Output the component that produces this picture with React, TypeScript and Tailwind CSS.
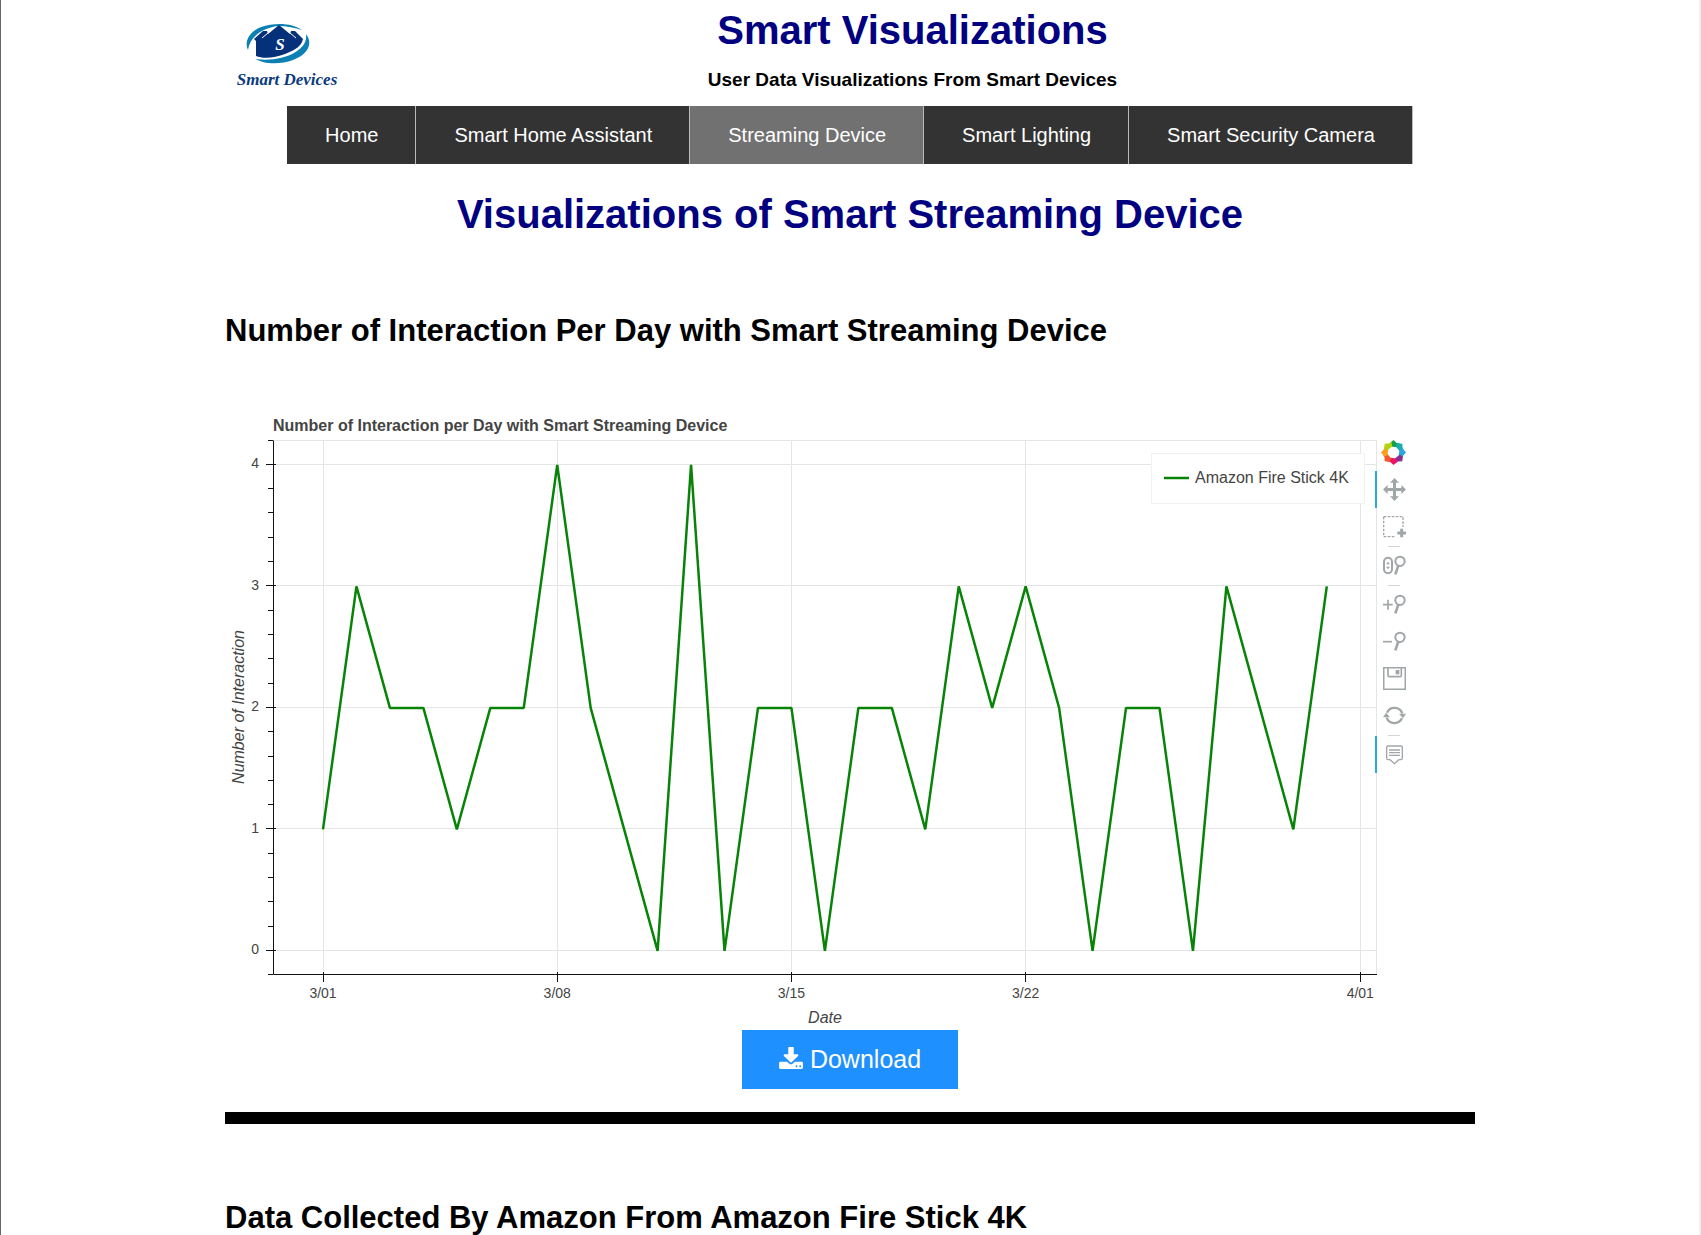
import React from "react";

const navItems = [
  { label: "Home", active: false },
  { label: "Smart Home Assistant", active: false },
  { label: "Streaming Device", active: true },
  { label: "Smart Lighting", active: false },
  { label: "Smart Security Camera", active: false },
];

// Interactions for each day, starting on 3/01.
const interactions = [
  1, 3, 2, 2, 1, 2, 2, 4, 2, 1, 0, 4, 0, 2, 2, 0, 2, 2, 1, 3, 2, 3, 2, 0, 2, 2, 0, 3, 2, 1, 3,
];

const dateTicks = [
  { day: 0, label: "3/01" },
  { day: 7, label: "3/08" },
  { day: 14, label: "3/15" },
  { day: 21, label: "3/22" },
  { day: 31, label: "4/01" },
];

const plot = { left: 48.5, right: 1151.5, top: 30.5, bottom: 564.5 };
const xOf = (day: number) => 98 + day * 33.46;
const yOf = (value: number) => 540.4 - value * 121.5;
const crisp = (v: number) => Math.floor(v) + 0.5;

function Logo() {
  return (
    <svg viewBox="0 0 125 106" className="h-[106px] w-[125px] shrink-0" role="img" aria-label="Smart Devices">
      <path
        d="M23 50 C19 42 24 32 36 27 C50 22 68 23 77 30 C70 28 62 26 53 26 C38 28 25 36 23 50Z"
        fill="#0d80b3"
      />
      <path
        d="M81 34 C88 43 84 54 68 60 C55 65 38 64 31 59 C46 61 60 58 69 53 C79 47 82 41 81 34Z"
        fill="#0d80b3"
      />
      <path
        d="M31 56 V41 L29 39 L38 31 H42 L43 34 L54 25 L65 34 L66 31 H70 L78 39 L77 42 C75 47 68 51 60 54 C50 58 38 59 31 56 Z"
        fill="#05317a"
      />
      <path d="M37 38 L43 33 M65 33 L71 38" stroke="#fff" strokeWidth="1" fill="none" />
      <text x="55" y="50" textAnchor="middle" fontFamily="Liberation Serif, serif" fontStyle="italic" fontWeight="700" fontSize="17" fill="#fff">
        S
      </text>
      <text x="62" y="85" textAnchor="middle" fontFamily="Liberation Serif, serif" fontStyle="italic" fontWeight="700" fontSize="17" fill="#0b3a7e">
        Smart Devices
      </text>
    </svg>
  );
}

function InteractionChart() {
  const minor = Array.from({ length: 23 }, (_, i) => -0.2 + i * 0.2);
  const points = interactions.map((v, d) => `${xOf(d)},${yOf(v) + 0.5}`).join(" ");
  return (
    <svg
      viewBox="0 0 1152 620"
      className="h-auto min-w-0 flex-1"
      fontFamily="Liberation Sans, Arial, sans-serif"
      fill="#444"
      role="img"
      aria-label="Number of Interaction per Day with Smart Streaming Device"
    >
      <text x="48" y="21" fontSize="16" fontWeight="700">
        Number of Interaction per Day with Smart Streaming Device
      </text>
      <g stroke="#e5e5e5" fill="none">
        <rect x={plot.left} y={plot.top} width={plot.right - plot.left} height={plot.bottom - plot.top} />
        {dateTicks.map((t) => (
          <line key={t.day} x1={crisp(xOf(t.day))} x2={crisp(xOf(t.day))} y1={plot.top} y2={plot.bottom} />
        ))}
        {[0, 1, 2, 3, 4].map((v) => (
          <line key={v} x1={plot.left} x2={plot.right} y1={crisp(yOf(v))} y2={crisp(yOf(v))} />
        ))}
      </g>
      <g stroke="#111">
        <line x1={plot.left} x2={plot.left} y1={plot.top} y2={plot.bottom} />
        <line x1={plot.left} x2={plot.right + 0.5} y1={plot.bottom} y2={plot.bottom} />
        {minor.map((v) => (
          <line key={v} x1="43" x2="48" y1={crisp(yOf(v))} y2={crisp(yOf(v))} />
        ))}
        {[0, 1, 2, 3, 4].map((v) => (
          <line key={v} x1="41" x2="51" y1={crisp(yOf(v))} y2={crisp(yOf(v))} />
        ))}
        {dateTicks.map((t) => (
          <line key={t.day} x1={crisp(xOf(t.day))} x2={crisp(xOf(t.day))} y1="562" y2="572" />
        ))}
      </g>
      <g fontSize="14">
        {[0, 1, 2, 3, 4].map((v) => (
          <text key={v} x="34" y={yOf(v) + 4} textAnchor="end">
            {v}
          </text>
        ))}
        {dateTicks.map((t) => (
          <text key={t.day} x={xOf(t.day)} y="588" textAnchor="middle">
            {t.label}
          </text>
        ))}
      </g>
      <text x="600" y="613" fontSize="16" fontStyle="italic" textAnchor="middle">
        Date
      </text>
      <text transform="translate(19 297) rotate(-90)" fontSize="16" fontStyle="italic" textAnchor="middle">
        Number of Interaction
      </text>
      <polyline points={points} fill="none" stroke="#078407" strokeWidth="2.5" strokeLinejoin="bevel" />
      <rect x="926.5" y="43.5" width="213" height="50" fill="#fff" fillOpacity="0.95" stroke="#f2f2f2" />
      <line x1="939" x2="964" y1="68" y2="68" stroke="#078407" strokeWidth="2.5" />
      <text x="970" y="73" fontSize="16">
        Amazon Fire Stick 4K
      </text>
    </svg>
  );
}

const petals = ["#14a04c", "#19adb0", "#27a6e0", "#8a2f92", "#ee1365", "#f2582a", "#f9a01f", "#b6d010"];

function BokehLogo() {
  return (
    <svg viewBox="-38 -38 76 76" className="size-[25px]" aria-hidden="true">
      {petals.map((color, i) => (
        <path key={color} d="M0 -38 L10 -29 L19 -27 L10 -16 L-8 -18 L-12 -28 Z" fill={color} transform={`rotate(${i * 45})`} />
      ))}
    </svg>
  );
}

const magnifier = (
  <g fill="none" stroke="#a1a6a9" strokeWidth="6">
    <circle cx="51" cy="22" r="14" />
    <path d="M46 35 L37 61" strokeWidth="8" />
  </g>
);

const toolIcons: Record<string, React.ReactNode> = {
  Pan: (
    <path
      fill="#a1a6a9"
      d="M34.5 0 L48 14 H39 V30 H55 V21 L69 34.5 L55 48 V39 H39 V55 H48 L34.5 69 L21 55 H30 V39 H14 V48 L0 34.5 L14 21 V30 H30 V14 H21 Z"
    />
  ),
  "Box Select": (
    <g fill="none" stroke="#a1a6a9">
      <path d="M2 5 H60 V36 M2 5 V65 H38" strokeWidth="4" strokeDasharray="8 4" />
      <path d="M43 54 H69 M56 41 V67" strokeWidth="9" />
    </g>
  ),
  "Wheel Zoom": (
    <>
      <rect x="3" y="11" width="24" height="47" rx="12" fill="none" stroke="#a1a6a9" strokeWidth="6" />
      <path d="M9 31 L15 23 L21 31 Z M9 38 L15 46 L21 38 Z" fill="#a1a6a9" />
      {magnifier}
    </>
  ),
  "Zoom In": (
    <>
      <path d="M0 35 H29 M15 20 V50" stroke="#a1a6a9" strokeWidth="5" />
      {magnifier}
    </>
  ),
  "Zoom Out": (
    <>
      <path d="M0 35 H27" stroke="#a1a6a9" strokeWidth="5" />
      {magnifier}
    </>
  ),
  Save: (
    <>
      <path d="M2 2 H67 V67 H2 Z M15 2 V25 Q15 29 19 29 H51 Q55 29 55 25 V2" fill="none" stroke="#a1a6a9" strokeWidth="5" />
      <rect x="38" y="9" width="11" height="13" fill="#a1a6a9" />
    </>
  ),
  Reset: (
    <>
      <path d="M12 26 A25 25 0 0 1 58 28 M57 43 A25 25 0 0 1 11 41" fill="none" stroke="#a1a6a9" strokeWidth="7" />
      <path d="M48 29 L69 29 L60 43 Z M0 40 L9 26 L21 40 Z" fill="#a1a6a9" />
    </>
  ),
  Hover: (
    <>
      <path d="M15 9 H54 Q58 9 58 13 V45 Q58 50 54 50 H48 L34.5 62 L21 50 H15 Q11 50 11 45 V13 Q11 9 15 9 Z" fill="none" stroke="#a1a6a9" strokeWidth="4" />
      <path d="M18 21 H51 M18 29 H51 M18 37 H51" stroke="#a1a6a9" strokeWidth="4" />
    </>
  ),
};

function Tool({ name, active = false }: { name: string; active?: boolean }) {
  return (
    <button
      type="button"
      aria-label={name}
      aria-pressed={active}
      className={`flex h-[37px] w-full items-center justify-center border-x-2 border-r-transparent ${
        active ? "border-l-[#26aae1]" : "border-l-transparent"
      }`}
    >
      <svg viewBox="0 0 69 69" className="size-[23px]" aria-hidden="true">
        {toolIcons[name]}
      </svg>
    </button>
  );
}

function Divider() {
  return <div className="mx-auto mt-px h-px w-3 bg-gray-300" />;
}

function Toolbar() {
  return (
    <div className="-ml-0.5 flex w-[38px] shrink-0 flex-col pt-[30px]">
      <a href="#bokeh" aria-label="Bokeh" className="flex h-[31px] justify-center pr-px">
        <BokehLogo />
      </a>
      <Tool name="Pan" active />
      <Tool name="Box Select" />
      <Divider />
      <Tool name="Wheel Zoom" />
      <Divider />
      <Tool name="Zoom In" />
      <Tool name="Zoom Out" />
      <Tool name="Save" />
      <Tool name="Reset" />
      <Divider />
      <Tool name="Hover" active />
    </div>
  );
}

function DownloadIcon() {
  return (
    <svg viewBox="0 0 1664 1536" className="mb-1 h-[22px] w-6" fill="currentColor" aria-hidden="true">
      <path d="M1280 1344q0-26-19-45t-45-19-45 19-19 45 19 45 45 19 45-19 19-45zm256 0q0-26-19-45t-45-19-45 19-19 45 19 45 45 19 45-19 19-45zm128-224v320q0 40-28 68t-68 28h-1472q-40 0-68-28t-28-68v-320q0-40 28-68t68-28h465l135 136q58 56 136 56t136-56l136-136h464q40 0 68 28t28 68zm-325-569q17 41-14 70l-448 448q-18 19-45 19t-45-19l-448-448q-31-29-14-70 17-39 59-39h256v-448q0-26 19-45t45-19h256q26 0 45 19t19 45v448h256q42 0 59 39z" />
    </svg>
  );
}

export default function App() {
  return (
    <div className="min-h-screen border-l border-r-2 border-l-[#666] border-r-[#f0f0f0] bg-white font-['Liberation_Sans',Arial,sans-serif] text-black">
      <div className="mx-auto max-w-[1250px]">
        <header className="flex">
          <Logo />
          <div className="flex-1 pt-[7px] text-center">
            <h1 className="text-[40px] leading-[46px] font-bold text-[#000080]">Smart Visualizations</h1>
            <p className="mt-[15px] text-[19px] leading-[23px] font-bold">User Data Visualizations From Smart Devices</p>
          </div>
        </header>

        <nav className="flex justify-center">
          <ul className="flex bg-[#333]">
            {navItems.map((item) => (
              <li key={item.label} className="border-r border-[#bbb]">
                <a
                  href="#nav"
                  aria-current={item.active ? "page" : undefined}
                  className={`flex h-[58px] items-center pr-[37px] pl-[38px] text-[20px] leading-[23px] whitespace-nowrap text-white ${
                    item.active ? "bg-[#717171]" : ""
                  }`}
                >
                  {item.label}
                </a>
              </li>
            ))}
          </ul>
        </nav>

        <main>
          <h1 className="mt-[27px] text-center text-[40px] leading-[46px] font-bold text-[#000080]">
            Visualizations of Smart Streaming Device
          </h1>

          <h2 className="mt-[77px] text-[31px] leading-[34px] font-bold">
            Number of Interaction Per Day with Smart Streaming Device
          </h2>

          <div className="mt-[62px] flex max-w-[1188px] items-start">
            <InteractionChart />
            <Toolbar />
          </div>

          <div className="flex justify-center">
            <button
              type="button"
              className="flex h-[59px] items-center gap-[7px] bg-[#1e90ff] px-[37px] text-[25px] leading-[29px] text-white"
            >
              <DownloadIcon />
              Download
            </button>
          </div>

          <hr className="mt-[23px] h-3 border-0 bg-black" />

          <h2 className="mt-[77px] text-[31px] leading-[34px] font-bold">
            Data Collected By Amazon From Amazon Fire Stick 4K
          </h2>
        </main>
      </div>
    </div>
  );
}
